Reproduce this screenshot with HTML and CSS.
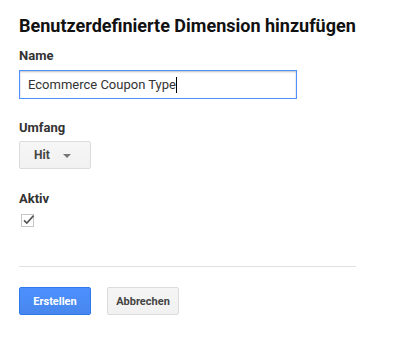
FILE: index.html
```html
<!DOCTYPE html>
<html lang="de">
<head>
<meta charset="utf-8">
<link rel="stylesheet" href="styles.css">
</head>
<body>
<div class="dialog">
  <h1 class="title">Benutzerdefinierte Dimension hinzufügen</h1>
  <div class="label label-name">Name</div>
  <div class="input"><span class="input-text">Ecommerce Coupon Type</span><span class="caret"></span></div>
  <div class="label label-scope">Umfang</div>
  <div class="select"><span class="select-text">Hit</span><span class="arrow"></span></div>
  <div class="label label-active">Aktiv</div>
  <div class="checkbox">
    <svg width="15" height="15" viewBox="0 0 15 15">
      <rect x="0.5" y="2.5" width="12" height="12" fill="#fff" stroke="#c6c6c6"/>
      <path d="M3 8.3 L5.8 11 L12.6 3.6" fill="none" stroke="#555" stroke-width="1.6"/>
    </svg>
  </div>
  <div class="divider"></div>
  <div class="actions">
    <div class="btn btn-primary">Erstellen</div>
    <div class="btn btn-default">Abbrechen</div>
  </div>
</div>
</body>
</html>
```
FILE: styles.css
```css
html, body {
  margin: 0;
  padding: 0;
  background: #fff;
}
.dialog {
  padding: 16px 0 0 19px;
  font-family: Roboto, "Liberation Sans", Arial, sans-serif;
  color: #222;
}
.title {
  margin: 0;
  font-size: 18px;
  line-height: 20px;
  font-weight: 700;
  color: #111;
}
.label {
  font-size: 13px;
  line-height: 16px;
  font-weight: 700;
  color: #333;
}
.label-name { margin-top: 12px; }
.label-scope { margin-top: 21px; }
.label-active { margin-top: 22px; }
.input {
  margin-top: 6px;
  height: 27px;
  border: 1px solid #4d90fe;
  box-shadow: inset 0 1px 2px rgba(0,0,0,0.25);
  display: flex;
  align-items: center;
  padding-left: 8px;
  box-sizing: content-box;
  width: 268px;
}
.input-text {
  font-size: 13px;
  color: #333;
}
.caret {
  width: 1px;
  height: 16px;
  background: #000;
}
.select {
  margin-top: 5px;
  width: 70px;
  height: 26px;
  border: 1px solid #dcdcdc;
  border-radius: 2px;
  background: linear-gradient(#f6f6f6, #f1f1f1);
  display: flex;
  align-items: center;
  box-sizing: content-box;
}
.select-text {
  margin-left: 14px;
  font-size: 12px;
  font-weight: 700;
  color: #444;
}
.arrow {
  margin-left: 13px;
  margin-top: 2px;
  width: 0;
  height: 0;
  border-left: 4px solid transparent;
  border-right: 4px solid transparent;
  border-top: 4px solid #777;
}
.checkbox {
  margin-top: 5px;
  margin-left: 2px;
  width: 15px;
  height: 15px;
}
.checkbox svg { display: block; }
.divider {
  margin-top: 39px;
  width: 337px;
  height: 1px;
  background: #e0e0e0;
}
.actions {
  margin-top: 20px;
  display: flex;
  gap: 16px;
}
.btn {
  width: 70px;
  height: 26px;
  border: 1px solid;
  border-radius: 2px;
  font-size: 11px;
  font-weight: 700;
  display: flex;
  align-items: center;
  justify-content: center;
  box-sizing: content-box;
}
.btn-primary {
  background: linear-gradient(#4d90fe, #4787ed);
  border-color: #3079ed;
  color: #fff;
}
.btn-default {
  background: linear-gradient(#f5f5f5, #f1f1f1);
  border-color: #dcdcdc;
  color: #444;
}
```
